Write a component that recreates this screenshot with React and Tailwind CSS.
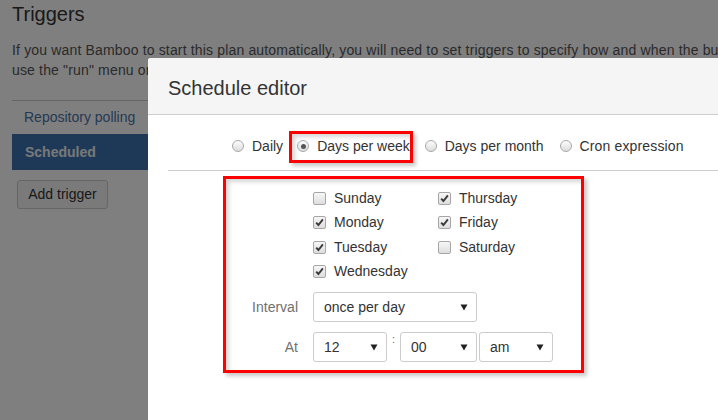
const font = { fontFamily: '"Liberation Sans", Arial, sans-serif' }

function Radio({ checked }) {
  return (
    <span className="relative inline-flex h-[12px] w-[12px] shrink-0 items-center justify-center rounded-full border border-[#a8a8a8] bg-gradient-to-b from-[#fdfdfd] to-[#dcdcdc]">
      {checked && <span className="h-[5px] w-[5px] rounded-full bg-[#555]" />}
    </span>
  )
}

function Checkbox({ checked }) {
  return (
    <span className="inline-flex h-[13px] w-[13px] shrink-0 items-center justify-center rounded-[2px] border border-[#a6a6a6] bg-gradient-to-b from-[#f6f6f6] to-[#dedede]">
      {checked && (
        <svg width="9" height="9" viewBox="0 0 9 9">
          <path d="M1.2 4.6 L3.4 7 L7.9 1.4" fill="none" stroke="#3a3a3a" strokeWidth="1.9" />
        </svg>
      )}
    </span>
  )
}

function Select({ value, width }) {
  return (
    <div className={`flex h-[30px] ${width} items-center justify-between rounded-[3px] border border-[#cccccc] bg-white pl-[10px] pr-[8px] text-[14px] text-[#333]`}>
      <span>{value}</span>
      <svg width="8" height="7" viewBox="0 0 8 7">
        <path d="M0.5 0.5 L7.5 0.5 L4 6.5 Z" fill="#222" />
      </svg>
    </div>
  )
}

const days = [
  ['Sunday', false],
  ['Monday', true],
  ['Tuesday', true],
  ['Wednesday', true],
  ['Thursday', true],
  ['Friday', true],
  ['Saturday', false],
]

const redBox = 'border-[3px] border-[#ff0000] shadow-[3px_3px_4px_rgba(0,0,0,0.22),inset_3px_3px_4px_rgba(0,0,0,0.16)]'

export default function App() {
  return (
    <div className="relative h-[420px] w-[718px] overflow-hidden bg-white" style={font}>
      {/* page behind the dialog */}
      <div className="px-[12px] pt-[3px]">
        <h1 className="text-[20px] leading-[23px] text-[#333]">Triggers</h1>
        <p className="mt-[14px] whitespace-nowrap text-[14px] leading-[20px] tracking-[0.16px] text-[#555]">
          If you want Bamboo to start this plan automatically, you will need to set triggers to specify how and when the build should start.
          <br />
          use the "run" menu on the plan summary page to start a build manually.
        </p>
        <div className="mt-[20px] w-[300px] border-t border-[#cccccc]">
          <div className="flex h-[33px] items-center pl-[12px] text-[14px] text-[#4a74a8]">Repository polling</div>
          <div className="flex h-[36px] items-center bg-[#3c73b0] pl-[13px] text-[14px] font-bold text-[#f0f0f0]">Scheduled</div>
        </div>
        <div className="ml-[5px] mt-[10px] flex h-[29px] w-[91px] items-center justify-center rounded-[3px] border border-[#cccccc] bg-[#f5f5f5] text-[14px] text-[#333]">
          Add trigger
        </div>
      </div>

      {/* overlay */}
      <div className="absolute inset-0 bg-black/50" />

      {/* dialog */}
      <div className="absolute left-[148px] top-[58px] h-[400px] w-[620px] rounded-tl-[3px] bg-white">
        <div className="flex h-[57px] items-center rounded-tl-[3px] border-b border-[#cccccc] bg-[#f5f5f5] pl-[20px] pt-[4px] text-[20px] text-[#333]">
          Schedule editor
        </div>
        <div className="px-[20px] pt-[16px]">
          <div className="flex h-[32px] items-center text-[14px] text-[#333]">
            <div className="ml-[64px] flex items-center gap-[8px] pb-[2px]">
              <Radio />
              <span>Daily</span>
            </div>
            <div className={`ml-[6px] flex h-[32px] items-center gap-[8px] pb-[2px] pl-[5px] ${redBox}`}>
              <Radio checked />
              <span>Days per week</span>
            </div>
            <div className="ml-[12px] flex items-center gap-[8px] pb-[2px]">
              <Radio />
              <span>Days per month</span>
            </div>
            <div className="ml-[16px] flex items-center gap-[8px] pb-[2px]">
              <Radio />
              <span className="tracking-[0.15px]">Cron expression</span>
            </div>
          </div>
          <div className="mt-[7px] border-t border-[#cccccc]" />

          <div className={`ml-[55px] mt-[5px] w-[361px] pb-[8px] pt-[7px] ${redBox}`}>
            <div className="flex">
              <div className="w-[72px]" />
              <div className="ml-[15px] grid grid-flow-col grid-cols-[125px_auto] grid-rows-[repeat(4,24.5px)] text-[14px] text-[#333]">
                {days.map(([name, on]) => (
                  <label key={name} className="flex items-center gap-[8px]">
                    <Checkbox checked={on} />
                    <span>{name}</span>
                  </label>
                ))}
              </div>
            </div>

            <div className="mt-[8px] flex items-center">
              <div className="w-[72px] text-right text-[14px] text-[#707070]">Interval</div>
              <div className="ml-[15px]">
                <Select value="once per day" width="w-[164px]" />
              </div>
            </div>

            <div className="mt-[10px] flex items-center">
              <div className="w-[72px] text-right text-[14px] text-[#707070]">At</div>
              <div className="ml-[15px] flex">
                <Select value="12" width="w-[74px]" />
                <span className="w-[13px] self-start pt-[1px] text-center text-[11px] leading-[12px] text-[#666]">:</span>
                <Select value="00" width="w-[77px]" />
                <div className="ml-[2px]">
                  <Select value="am" width="w-[74px]" />
                </div>
              </div>
            </div>
          </div>
        </div>
      </div>
    </div>
  )
}
